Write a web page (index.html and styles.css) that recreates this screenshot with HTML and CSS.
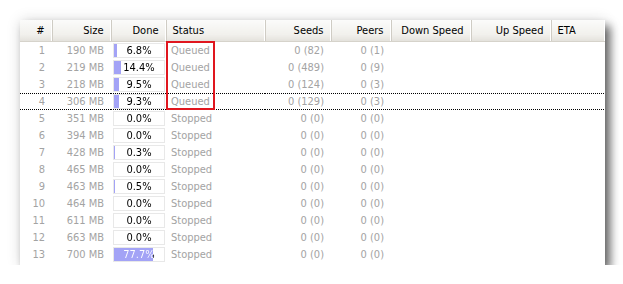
FILE: index.html
```html
<!DOCTYPE html>
<html lang="en">
<head>
    <meta charset="UTF-8">
    <title>Transfers</title>
    <link rel="stylesheet" href="styles.css">
</head>
<body>
    <div class="panel">
        <table class="transfers">
            <colgroup>
                <col class="c-num">
                <col class="c-size">
                <col class="c-done">
                <col class="c-status">
                <col class="c-seeds">
                <col class="c-peers">
                <col class="c-down">
                <col class="c-up">
                <col class="c-eta">
            </colgroup>
            <thead>
                <tr>
                    <th class="r">#</th>
                    <th class="r">Size</th>
                    <th class="r">Done</th>
                    <th>Status</th>
                    <th class="r">Seeds</th>
                    <th class="r">Peers</th>
                    <th class="r">Down Speed</th>
                    <th class="r">Up Speed</th>
                    <th>ETA</th>
                </tr>
            </thead>
            <tbody id="rows"></tbody>
        </table>
        <div class="highlight"></div>
    </div>

    <script>
        const items = [
            [1, '190 MB', 6.8, 'Queued', '0 (82)', '0 (1)'],
            [2, '219 MB', 14.4, 'Queued', '0 (489)', '0 (9)'],
            [3, '218 MB', 9.5, 'Queued', '0 (124)', '0 (3)'],
            [4, '306 MB', 9.3, 'Queued', '0 (129)', '0 (3)'],
            [5, '351 MB', 0.0, 'Stopped', '0 (0)', '0 (0)'],
            [6, '394 MB', 0.0, 'Stopped', '0 (0)', '0 (0)'],
            [7, '428 MB', 0.3, 'Stopped', '0 (0)', '0 (0)'],
            [8, '465 MB', 0.0, 'Stopped', '0 (0)', '0 (0)'],
            [9, '463 MB', 0.5, 'Stopped', '0 (0)', '0 (0)'],
            [10, '464 MB', 0.0, 'Stopped', '0 (0)', '0 (0)'],
            [11, '611 MB', 0.0, 'Stopped', '0 (0)', '0 (0)'],
            [12, '663 MB', 0.0, 'Stopped', '0 (0)', '0 (0)'],
            [13, '700 MB', 77.7, 'Stopped', '0 (0)', '0 (0)']
        ];

        const tbody = document.getElementById('rows');

        items.forEach(([num, size, done, status, seeds, peers]) => {
            const tr = document.createElement('tr');
            if (num === 4) tr.className = 'focused';
            const pct = done.toFixed(1) + '%';
            // label colour flips to white where the bar lies under it
            const split = `${done}%`;
            tr.innerHTML = `
                <td class="r">${num}</td>
                <td class="r">${size}</td>
                <td class="done">
                    <div class="progress">
                        <div class="bar" style="width: ${done}%"></div>
                        <span class="label" style="--split: ${split}">${pct}</span>
                    </div>
                </td>
                <td>${status}</td>
                <td class="r">${seeds}</td>
                <td class="r">${peers}</td>
                <td></td>
                <td></td>
                <td></td>`;
            tbody.appendChild(tr);
        });
    </script>
</body>
</html>
```

FILE: styles.css
```css
body {
    margin: 0;
    background: #fff;
    font-family: "DejaVu Sans Condensed", "DejaVu Sans", sans-serif;
    font-size: 11px;
}

.panel {
    position: relative;
    margin: 20px 0 0 20px;
    width: 585px;
    height: 245px;
    background: #fff;
    box-shadow: 5px 6px 9px rgba(0, 0, 0, 0.6), 0 0 14px rgba(0, 0, 0, 0.12);
}

.transfers {
    width: 585px;
    table-layout: fixed;
    border-collapse: collapse;
    border-spacing: 0;
}

.c-num { width: 32px; }
.c-size { width: 59px; }
.c-done { width: 55px; }
.c-status { width: 99px; }
.c-seeds { width: 66px; }
.c-peers { width: 60px; }
.c-down { width: 80px; }
.c-up { width: 80px; }
.c-eta { width: 54px; }

.transfers th {
    height: 21px;
    padding: 0 6px;
    font-weight: normal;
    color: #000;
    text-align: left;
    white-space: nowrap;
    background: linear-gradient(#fbfbfa, #f1f0ec 70%, #e4e2dc);
    border-bottom: 1px solid #d6d3cb;
    border-right: 1px solid #cfccc4;
    box-shadow: inset -1px 0 0 #fff;
    box-sizing: border-box;
}

.transfers th:last-child {
    border-right: none;
}

.transfers td {
    height: 17px;
    padding: 0 7px 0 5px;
    color: #a3a3a3;
    white-space: nowrap;
}

.transfers .r {
    text-align: right;
}

.transfers th.r {
    padding-right: 7px;
}

.transfers td.done {
    padding: 0 1px 0 2px;
}

.progress {
    position: relative;
    height: 13px;
    border: 1px solid #e8e8e8;
    text-align: center;
}

.progress .bar {
    position: absolute;
    top: 0;
    left: 0;
    height: 13px;
    background: #a3a3f6;
}

.progress .label {
    position: relative;
    display: block;
    line-height: 13px;
    color: transparent;
    background: linear-gradient(to right, #fff var(--split), #000 var(--split));
    -webkit-background-clip: text;
    background-clip: text;
}

.focused td {
    background:
        linear-gradient(to right, #000 50%, transparent 50%) top left / 2px 1px repeat-x,
        linear-gradient(to right, #000 50%, transparent 50%) bottom left / 2px 1px repeat-x;
}

.highlight {
    position: absolute;
    left: 146px;
    top: 21px;
    width: 45px;
    height: 65px;
    border: 2px solid #e0161e;
}
```
